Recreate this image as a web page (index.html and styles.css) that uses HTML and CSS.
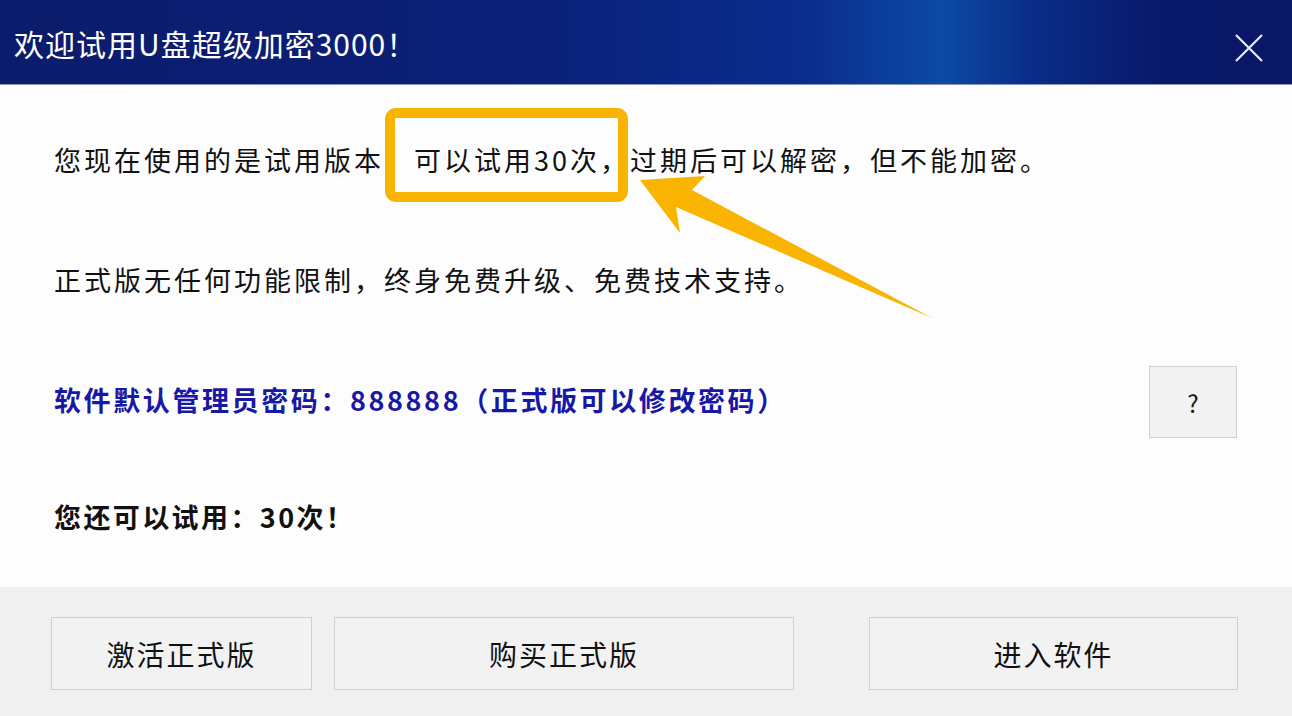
FILE: index.html
```html
<!DOCTYPE html>
<html lang="zh-CN">
<head>
<meta charset="utf-8">
<title>欢迎试用U盘超级加密3000！</title>
<link rel="stylesheet" href="styles.css">
</head>
<body>
<div class="window">
  <header class="titlebar">
    <h1 class="title">欢迎试用U盘超级加密3000！</h1>
    <span class="close" aria-label="关闭">
      <svg width="30" height="30" viewBox="0 0 30 30"><path d="M2 2 L28 28 M28 2 L2 28" stroke="#e8ecf8" stroke-width="2.2" fill="none"/></svg>
    </span>
  </header>
  <main class="content">
    <p class="line">您现在使用的是试用版本，可以试用30次，过期后可以解密，但不能加密。</p>
    <p class="line">正式版无任何功能限制，终身免费升级、免费技术支持。</p>
    <div class="line row">
      <p class="pwd">软件默认管理员密码：888888（正式版可以修改密码）</p>
      <button class="btn help">?</button>
    </div>
    <p class="line remain">您还可以试用：30次！</p>
  </main>
  <footer class="actions">
    <button class="btn act">激活正式版</button>
    <button class="btn buy">购买正式版</button>
    <button class="btn enter">进入软件</button>
  </footer>
  <svg class="annotation" width="1292" height="716" viewBox="0 0 1292 716">
    <rect x="390" y="113" width="233" height="84" rx="6" ry="6" fill="none" stroke="#f8b400" stroke-width="10"/>
    <polygon points="640,180 705,176 692,190 932,318 676,207 680,233" fill="#f8b400"/>
  </svg>
</div>
</body>
</html>
```
FILE: styles.css
```css
html, body {
  margin: 0;
  padding: 0;
  background: #ffffff;
}
body {
  font-family: "Noto Sans CJK SC", "Noto Sans", sans-serif;
}
.window {
  position: relative;
  width: 1292px;
  height: 716px;
  display: flex;
  flex-direction: column;
  overflow: hidden;
  background: #fdfdfe;
}
.titlebar {
  height: 85px;
  flex: 0 0 85px;
  display: flex;
  align-items: center;
  justify-content: space-between;
  padding: 0 28px 0 14px;
  box-sizing: border-box;
  background: linear-gradient(90deg, #0b1c6c 0%, #0b2078 40%, #0a2c8c 62%, #0c4aa6 73%, #0a2c86 80%, #08196a 90%, #081766 100%);
  border-bottom: 1px solid #8a93b8;
}
.title {
  margin: 0;
  font-weight: normal;
  font-size: 30px;
  letter-spacing: 1px;
  color: #ffffff;
  line-height: 1;
  padding-top: 2px;
}
.close {
  display: flex;
  width: 30px;
  height: 30px;
  margin-top: 12px;
}
.content {
  flex: 1;
  display: grid;
  grid-template-rows: 118px 122px 118px 117px;
  padding: 15px 55px 0 54px;
  box-sizing: border-box;
}
.line {
  margin: 0;
  display: flex;
  align-items: center;
  font-size: 27px;
  letter-spacing: 3px;
  color: #111111;
}
.row {
  justify-content: space-between;
}
.pwd {
  margin: 0;
  font-size: 27px;
  font-weight: bold;
  letter-spacing: 2.6px;
  color: #1818a6;
}
.remain {
  font-size: 27px;
  font-weight: bold;
  letter-spacing: 2.4px;
}
.btn {
  font-family: "Noto Sans CJK SC", "Noto Sans", sans-serif;
  background: #f2f2f3;
  border: 1px solid #cfd0d4;
  color: #111111;
  font-size: 28px;
  letter-spacing: 2px;
  padding: 0;
  margin: 0;
  cursor: default;
}
.help {
  width: 88px;
  height: 72px;
  font-size: 24px;
  letter-spacing: 0;
  margin-top: 6px;
}
.actions {
  flex: 0 0 129px;
  height: 129px;
  box-sizing: border-box;
  background: #f0f0f1;
  display: flex;
  align-items: flex-start;
  padding: 30px 0 0 51px;
}
.actions .btn {
  height: 73px;
}
.act { width: 261px; }
.buy { width: 460px; margin-left: 22px; }
.enter { width: 369px; margin-left: 75px; }
.annotation {
  position: absolute;
  left: 0;
  top: 0;
  pointer-events: none;
}
```
